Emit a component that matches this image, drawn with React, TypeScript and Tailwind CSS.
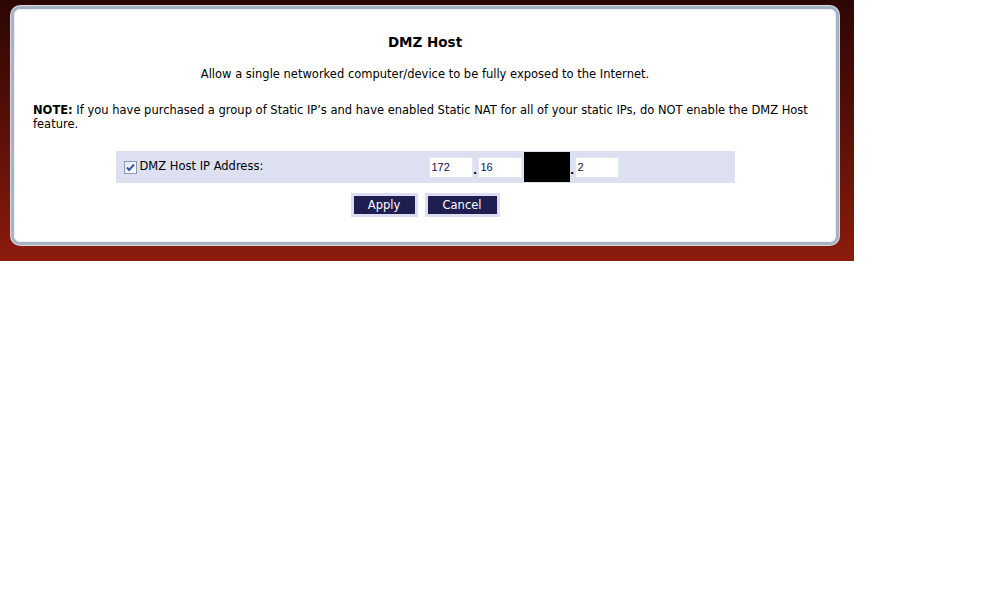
import React from 'react';

// DMZ Host settings panel (router admin page style)
function IpBox({ value }: { value: string }) {
  return (
    <input
      type="text"
      defaultValue={value}
      className="w-[44px] h-[21px] bg-white border border-[#e4e6ee] px-[2px] text-[11px] text-[#10104a] outline-none font-['Liberation_Sans',Arial,sans-serif]"
    />
  );
}

function Dot() {
  return <span className="w-[5px] h-[21px] flex items-end justify-center text-[11px] leading-[14px] font-bold">.</span>;
}

function Button({ label, width }: { label: string; width: string }) {
  return (
    <div className="bg-[#dcdcf4] p-[3px]">
      <button
        className={`${width} h-[18px] bg-[#1e1e50] text-white text-[11.5px] leading-[18px] flex items-center justify-center`}
      >
        {label}
      </button>
    </div>
  );
}

export default function App() {
  return (
    <div className="w-[999px] h-[606px] bg-white font-['DejaVu_Sans',Verdana,sans-serif] text-black">
      <div className="w-[854px] h-[261px] bg-gradient-to-b from-[#2c0704] via-[#5a1008] to-[#8c1b0b] pt-[5px] pl-[10px]">
        <div className="w-[830px] h-[241px] rounded-[10px] bg-[#d4d9e2] p-[1px]">
          <div className="h-full rounded-[9px] border-[3px] border-[#a8b2c5]">
            <div className="h-full rounded-[6px] border border-[#eef0f5] bg-white pt-[24px] px-[16px]">
              <h1 className="text-[13.5px] leading-[16px] font-bold text-center">DMZ Host</h1>

              <p className="mt-[17px] text-[11.5px] leading-[14px] text-center">
                Allow a single networked computer/device to be fully exposed to the Internet.
              </p>

              <p className="mt-[22px] text-[11.5px] leading-[14px] pl-[2px] pr-[10px]">
                <strong>NOTE:</strong> If you have purchased a group of Static IP’s and have enabled Static NAT for all of your static IPs, do NOT enable the DMZ Host feature.
              </p>

              {/* IP address row */}
              <div className="mt-[20px] mx-auto w-[619px] h-[32px] bg-[#dde0f1] flex items-center pl-[8px]">
                <div className="w-[305px] flex items-center gap-[3px] text-[11.5px]">
                  <span className="w-[13px] h-[13px] border border-[#8a98b0] bg-gradient-to-br from-[#e6e8ee] to-[#ffffff] flex items-center justify-center">
                    <svg width="11" height="11" viewBox="0 0 11 11">
                      <path d="M2 5.5 L4.2 8 L9 2.5" fill="none" stroke="#3d55a8" strokeWidth="2" />
                    </svg>
                  </span>
                  <span>DMZ Host IP Address:</span>
                </div>
                <div className="flex items-center">
                  <IpBox value="172" />
                  <Dot />
                  <IpBox value="16" />
                  <div className="w-[46px] h-[30px] bg-black ml-[2px]" />
                  <Dot />
                  <IpBox value="2" />
                </div>
              </div>

              <div className="mt-[10px] flex justify-center gap-[7px]">
                <Button label="Apply" width="w-[61px]" />
                <Button label="Cancel" width="w-[69px]" />
              </div>
            </div>
          </div>
        </div>
      </div>
    </div>
  );
}
